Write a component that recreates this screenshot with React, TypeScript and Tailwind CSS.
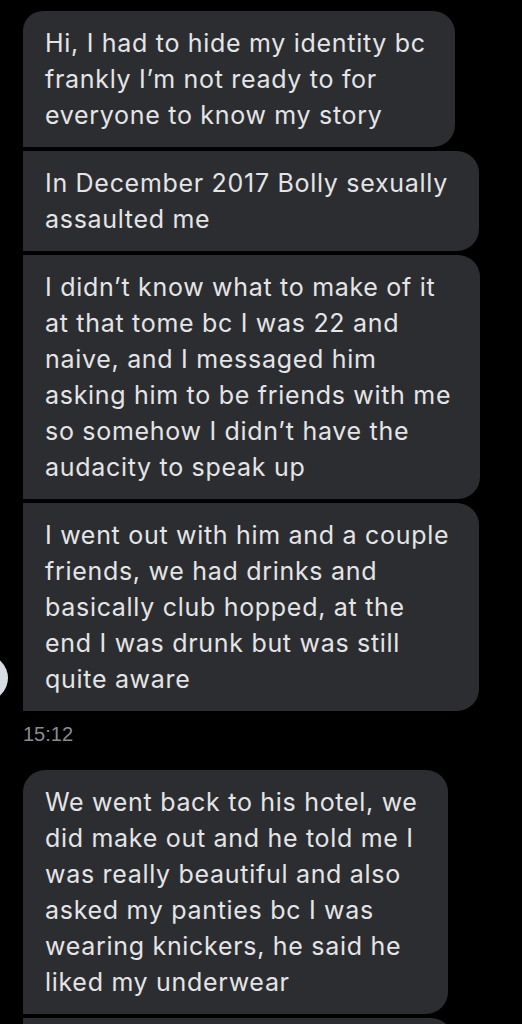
import React from "react";

type Msg = { lines: string[]; width: string; round: string };

const first: Msg[] = [
  {
    lines: ["Hi, I had to hide my identity bc", "frankly I\u2019m not ready to for", "everyone to know my story"],
    width: "w-[432px]",
    round: "rounded-tl-[20px] rounded-r-[22px]",
  },
  {
    lines: ["In December 2017 Bolly sexually", "assaulted me"],
    width: "w-[456px]",
    round: "rounded-r-[22px]",
  },
  {
    lines: [
      "I didn\u2019t know what to make of it",
      "at that tome bc I was 22 and",
      "naive, and I messaged him",
      "asking him to be friends with me",
      "so somehow I didn\u2019t have the",
      "audacity to speak up",
    ],
    width: "w-[457px]",
    round: "rounded-r-[22px]",
  },
];

const Bubble: React.FC<{ msg: Msg }> = ({ msg }) => (
  <div className={`${msg.width} ${msg.round} bg-[#2c2d30] pl-[22px] py-[14px]`}>
    {msg.lines.map((l, i) => (
      <div key={i} className="whitespace-nowrap">
        {l}
      </div>
    ))}
  </div>
);

const App: React.FC = () => {
  return (
    <div
      className="h-screen overflow-hidden bg-black text-[#e4e4e6] text-[25px] leading-[36px] tracking-[0.7px] pt-[11px] pl-[23px]"
      style={{ fontFamily: "Inter, 'Open Sans', sans-serif" }}
    >
      <div className="flex flex-col gap-[4px]">
        {first.map((m, i) => (
          <Bubble key={i} msg={m} />
        ))}
        <div className="relative">
          <Bubble
            msg={{
              lines: [
                "I went out with him and a couple",
                "friends, we had drinks and",
                "basically club hopped, at the",
                "end I was drunk but was still",
                "quite aware",
              ],
              width: "w-[456px]",
              round: "rounded-r-[22px]",
            }}
          />
          <div className="absolute left-[-61px] top-[152px] w-[46px] h-[46px] rounded-full bg-[#d8dde4]" />
        </div>
      </div>

      <div
        className="mt-[9px] text-[20px] leading-[28px] tracking-normal text-[#8b8b90]"
        style={{ fontFamily: "'Liberation Sans', Arial, sans-serif" }}
      >
        15:12
      </div>

      <div className="mt-[22px] flex flex-col gap-[4px]">
        <Bubble
          msg={{
            lines: [
              "We went back to his hotel, we",
              "did make out and he told me I",
              "was really beautiful and also",
              "asked my panties bc I was",
              "wearing knickers, he said he",
              "liked my underwear",
            ],
            width: "w-[425px]",
            round: "rounded-tl-[22px] rounded-r-[22px]",
          }}
        />
        <div className="w-[430px] h-[60px] bg-[#2c2d30] rounded-r-[22px]" />
      </div>
    </div>
  );
};

export default App;
